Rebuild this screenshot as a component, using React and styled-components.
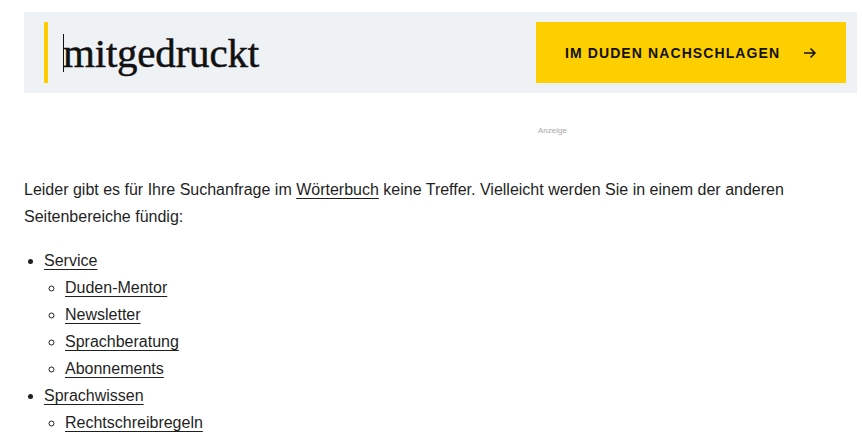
import React from "react";
import styled, { createGlobalStyle } from "styled-components";

const SECTIONS = [
  {
    label: "Service",
    children: ["Duden-Mentor", "Newsletter", "Sprachberatung", "Abonnements"],
  },
  {
    label: "Sprachwissen",
    children: ["Rechtschreibregeln"],
  },
];

const GlobalStyle = createGlobalStyle`
  body {
    margin: 0;
    background: #fff;
    color: #1f1f1f;
    font-family: "Liberation Sans", Arial, sans-serif;
  }
`;

function ArrowIcon() {
  return (
    <svg width="14" height="14" viewBox="0 0 14 14" fill="none">
      <path
        d="M1 7h11M7.5 2.5 12 7l-4.5 4.5"
        stroke="#111"
        strokeWidth="1.5"
      />
    </svg>
  );
}

export default function App() {
  return (
    <Page>
      <GlobalStyle />
      <SearchBar>
        <Field>
          <Caret />
          <Query>mitgedruckt</Query>
        </Field>
        <LookupButton>
          <span>IM DUDEN NACHSCHLAGEN</span>
          <ArrowIcon />
        </LookupButton>
      </SearchBar>
      <Ad>Anzeige</Ad>
      <Message>
        Leider gibt es für Ihre Suchanfrage im <Link>Wörterbuch</Link> keine
        Treffer. Vielleicht werden Sie in einem der anderen Seitenbereiche
        fündig:
      </Message>
      <List>
        {SECTIONS.map((section) => (
          <li key={section.label}>
            <Link>{section.label}</Link>
            <SubList>
              {section.children.map((child) => (
                <li key={child}>
                  <Link>{child}</Link>
                </li>
              ))}
            </SubList>
          </li>
        ))}
      </List>
    </Page>
  );
}

const Page = styled.div`
  padding: 12px 5px 0 24px;
  width: 833px;
`;

const SearchBar = styled.div`
  display: flex;
  align-items: center;
  justify-content: space-between;
  height: 81px;
  background: #eff2f5;
  padding: 0 11px 0 20px;
`;

const Field = styled.div`
  display: flex;
  align-items: center;
  height: 61px;
  border-left: 4px solid #fecc00;
  padding-left: 15px;
`;

const Caret = styled.span`
  width: 1px;
  height: 38px;
  background: #111;
  margin-right: -1px;
`;

const Query = styled.div`
  font-family: "Liberation Serif", "DejaVu Serif", serif;
  font-size: 41px;
  color: #111;
  -webkit-text-stroke: 0.5px #111;
  letter-spacing: -0.2px;
`;

const LookupButton = styled.div`
  display: flex;
  align-items: center;
  gap: 23px;
  height: 61px;
  width: 310px;
  box-sizing: border-box;
  padding-left: 29px;
  background: #fecf00;
  font-family: "Liberation Sans", Arial, sans-serif;
  font-weight: 700;
  font-size: 14px;
  letter-spacing: 1.1px;
  color: #111;
`;

const Ad = styled.div`
  text-align: center;
  font-size: 8px;
  color: #a8a8a8;
  margin-top: 33px;
  padding-left: 224px;
  line-height: 10px;
`;

const Message = styled.p`
  font-size: 16px;
  line-height: 27px;
  margin: 40px 0 17px;
`;

const Link = styled.a`
  color: inherit;
  text-decoration: underline;
  text-underline-offset: 3px;
  text-decoration-thickness: 1px;
`;

const List = styled.ul`
  margin: 0;
  padding-left: 20px;
  font-size: 16px;
  line-height: 27px;
`;

const SubList = styled.ul`
  margin: 0;
  padding-left: 21px;
  list-style-type: circle;
`;
